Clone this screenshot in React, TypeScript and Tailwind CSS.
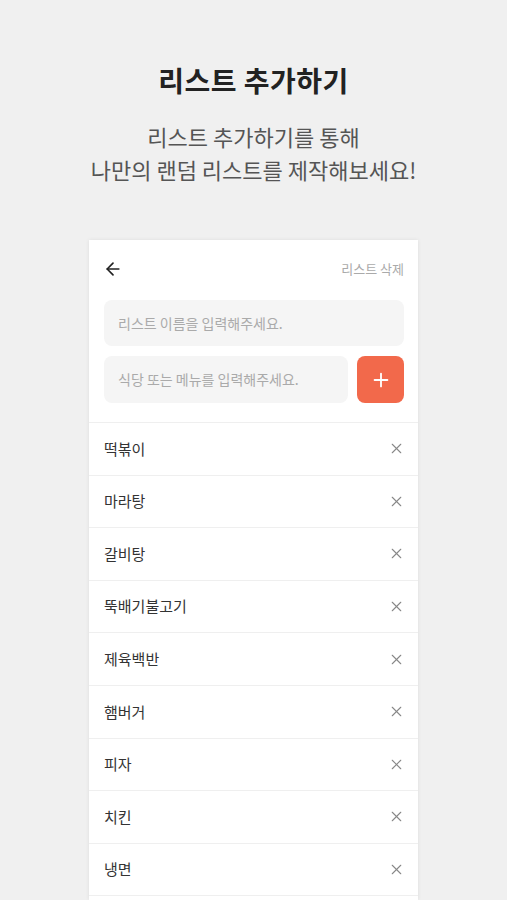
import { ArrowLeft, Plus, X } from 'lucide-react';

const items = ['떡볶이', '마라탕', '갈비탕', '뚝배기불고기', '제육백반', '햄버거', '피자', '치킨', '냉면'];

export default function App() {
  return (
    <div
      className="min-h-[900px] h-[900px] overflow-hidden bg-[#f0f0f0] flex flex-col items-center"
      style={{ fontFamily: '"Noto Sans CJK KR", "Noto Sans", sans-serif' }}
    >
      {/* Header */}
      <h1 className="mt-[60px] text-[28px] leading-[40px] font-bold text-[#222] tracking-[0.5px]">
        리스트 추가하기
      </h1>
      <p className="mt-[20px] text-[22px] leading-[33px] text-[#555] text-center">
        리스트 추가하기를 통해
        <br />
        나만의 랜덤 리스트를 제작해보세요!
      </p>

      {/* Card */}
      <div className="mt-[54px] w-[329px] bg-white shadow-[0_0_4px_rgba(0,0,0,0.08)] flex-1">
        <div className="pl-[15px] pr-[14px] pt-[18px] pb-[19px]">
          <div className="flex items-center justify-between h-[22px]">
            <ArrowLeft size={20} strokeWidth={2} className="text-[#222] ml-[-1px]" />
            <span className="text-[13px] text-[#aaa]">리스트 삭제</span>
          </div>
          <div className="mt-[20px] h-[46px] rounded-[8px] bg-[#f5f5f5] flex items-center px-[14px] text-[14px] text-[#aaa]">
            리스트 이름을 입력해주세요.
          </div>
          <div className="mt-[10px] flex gap-[9px]">
            <div className="flex-1 h-[47px] rounded-[8px] bg-[#f5f5f5] flex items-center px-[14px] text-[14px] text-[#aaa]">
              식당 또는 메뉴를 입력해주세요.
            </div>
            <button className="w-[47px] h-[47px] rounded-[8px] bg-[#f2694b] flex items-center justify-center">
              <Plus size={22} strokeWidth={2} className="text-white" />
            </button>
          </div>
        </div>
        <div className="border-t border-[#efefef]">
          {items.map((item) => (
            <div
              key={item}
              className="h-[52.6px] border-b border-[#efefef] flex items-center justify-between pl-[15px] pr-[13px]"
            >
              <span className="text-[15px] text-[#333]">{item}</span>
              <X size={17} strokeWidth={1.5} className="text-[#888]" />
            </div>
          ))}
        </div>
      </div>
    </div>
  );
}
